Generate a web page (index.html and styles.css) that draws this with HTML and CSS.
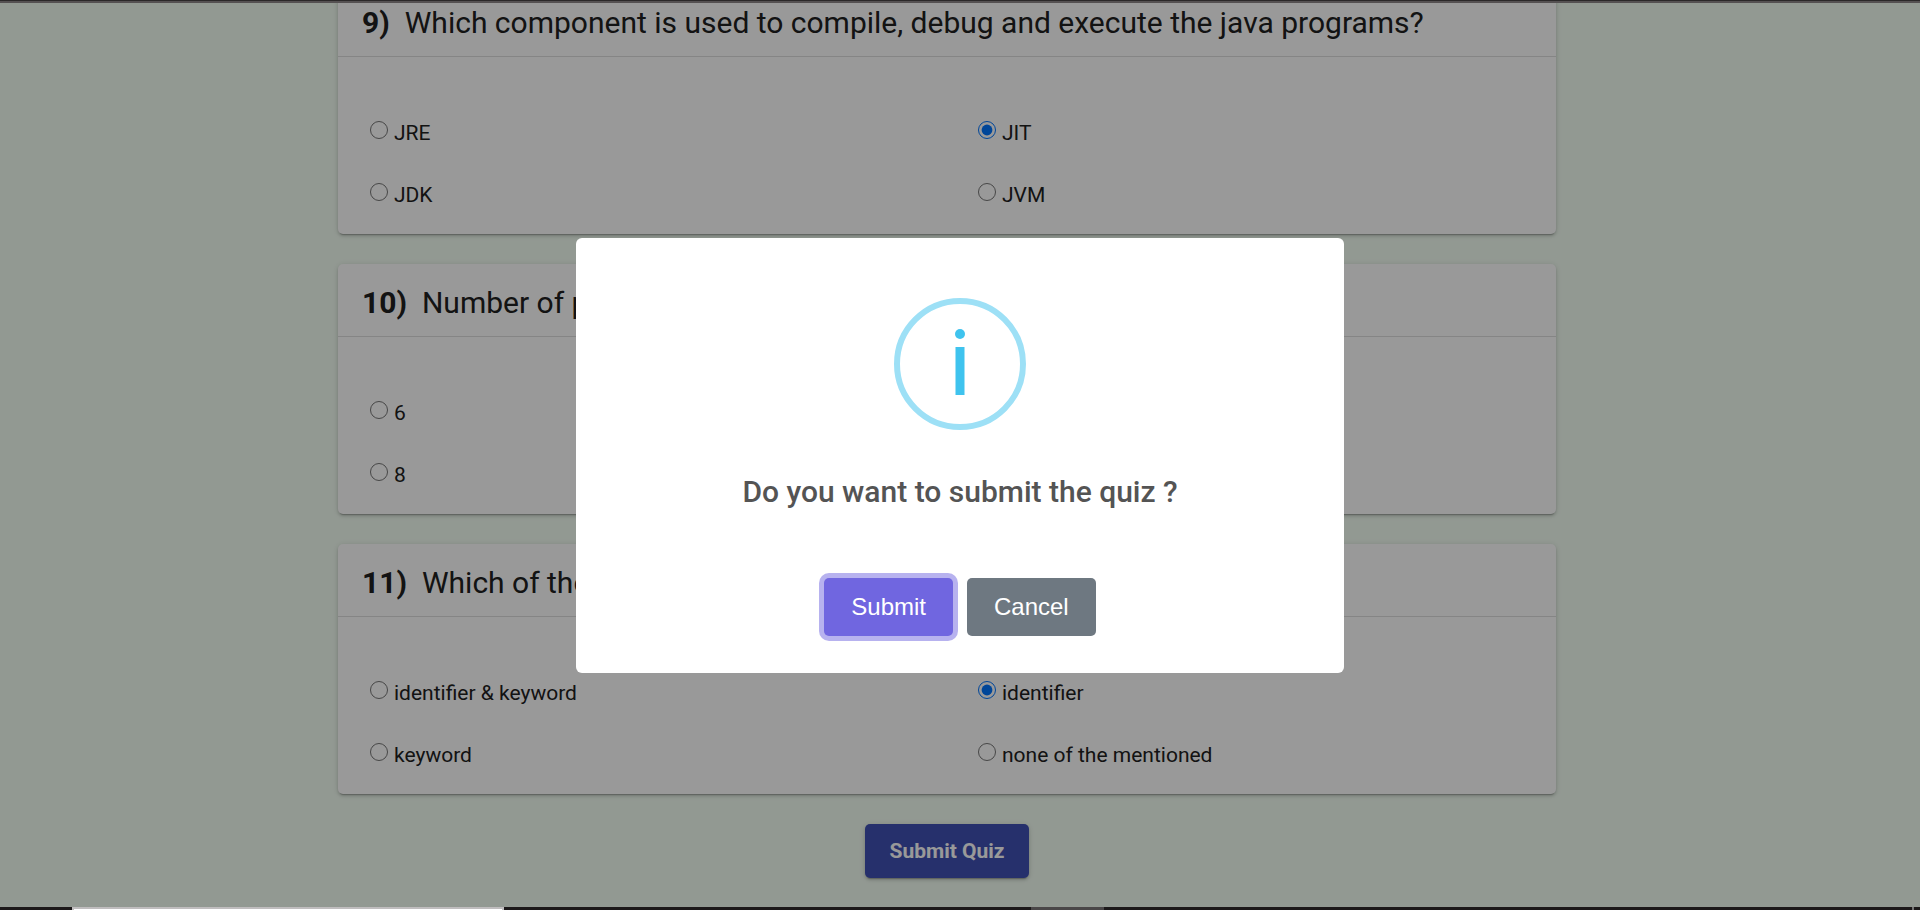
FILE: index.html
```html
<!DOCTYPE html>
<html lang="en">
<head>
<meta charset="utf-8">
<title>Quiz</title>
<link rel="stylesheet" href="styles.css">
</head>
<body>
<div class="window">
  <div class="window-edge"></div>
  <main class="page">
    <form class="quiz">
      <section class="card" role="radiogroup" aria-labelledby="q9-title">
        <h2 class="card-title" id="q9-title"><strong>9)</strong><span>Which component is used to compile, debug and execute the java programs?</span></h2>
        <div class="options">
          <label class="option"><input type="radio" name="q9"><span>JRE</span></label>
          <label class="option"><input type="radio" name="q9" checked><span>JIT</span></label>
          <label class="option"><input type="radio" name="q9"><span>JDK</span></label>
          <label class="option"><input type="radio" name="q9"><span>JVM</span></label>
        </div>
      </section>
      <section class="card" role="radiogroup" aria-labelledby="q10-title">
        <h2 class="card-title" id="q10-title"><strong>10)</strong><span>Number of p</span></h2>
        <div class="options">
          <label class="option option-first"><input type="radio" name="q10"><span>6</span></label>
          <label class="option option-first"><input type="radio" name="q10"><span>8</span></label>
        </div>
      </section>
      <section class="card" role="radiogroup" aria-labelledby="q11-title">
        <h2 class="card-title" id="q11-title"><strong>11)</strong><span>Which of the</span></h2>
        <div class="options">
          <label class="option"><input type="radio" name="q11"><span>identifier &amp; keyword</span></label>
          <label class="option"><input type="radio" name="q11" checked><span>identifier</span></label>
          <label class="option"><input type="radio" name="q11"><span>keyword</span></label>
          <label class="option"><input type="radio" name="q11"><span>none of the mentioned</span></label>
        </div>
      </section>
      <button type="button" class="submit-quiz">Submit Quiz</button>
    </form>
  </main>
  <div class="taskbar">
    <div class="task-active"></div>
    <div class="task-item"></div>
    <div class="task-end"></div>
  </div>
</div>
<div class="overlay">
  <div class="dialog" role="dialog" aria-modal="true" aria-labelledby="dialog-title">
    <svg class="dialog-icon" viewBox="0 0 132 132" aria-hidden="true">
      <circle cx="66" cy="66" r="63" fill="none" stroke="#9de0f6" stroke-width="6"/>
      <circle cx="66" cy="36" r="5" fill="#3fc3ee"/>
      <rect x="61.5" y="49" width="9" height="48" fill="#3fc3ee"/>
    </svg>
    <h2 class="dialog-title" id="dialog-title">Do you want to submit the quiz ?</h2>
    <div class="dialog-actions">
      <button type="button" class="action action-confirm">Submit</button>
      <button type="button" class="action action-cancel">Cancel</button>
    </div>
  </div>
</div>
</body>
</html>
```
FILE: styles.css
```css
* { box-sizing: border-box; }

body {
  margin: 0;
  font-family: Roboto, "Liberation Sans", sans-serif;
  color: #212121;
}

.window {
  display: flex;
  flex-direction: column;
  height: 100vh;
}

.window-edge {
  flex: none;
  height: 3px;
  background: #555152;
  border-top: 1px solid #2b2829;
}

.page {
  flex: 1;
  min-height: 0;
  overflow: hidden;
  background: #f4fff4;
  padding: 0 364px 0 338px;
}

/* The list is scrolled so that the first card starts above the top edge. */
.quiz {
  display: flex;
  flex-direction: column;
  gap: 30px;
  margin-top: -19px;
}

.card {
  border-radius: 5px;
  background: #fff;
  box-shadow: 0 3px 1px -2px rgba(0, 0, 0, .2), 0 2px 3px rgba(0, 0, 0, .14), 0 1px 6px rgba(0, 0, 0, .12);
}

.card-title {
  display: flex;
  gap: 15px;
  margin: 0;
  padding: 21px 24px 15px;
  border-bottom: 1px solid #dedede;
  font-size: 30px;
  line-height: 36px;
  font-weight: 400;
}

.options {
  display: grid;
  grid-template-columns: 1fr 1fr;
  row-gap: 38px;
  padding: 64px 2px 27px 0;
}

.option {
  display: flex;
  gap: 6px;
  padding-left: 32px;
  font-size: 21px;
  line-height: 24px;
}

.option-first { grid-column: 1; }

.option input {
  flex: none;
  width: 18px;
  height: 18px;
  margin: 0;
  accent-color: #0075ff;
}

.submit-quiz {
  align-self: center;
  padding: 15px 24px;
  border: 0;
  border-radius: 5px;
  background: #4050b5;
  color: #fff;
  font: bold 21px/24px Roboto, sans-serif;
  box-shadow: 0 3px 1px -2px rgba(0, 0, 0, .2), 0 2px 3px rgba(0, 0, 0, .14), 0 1px 6px rgba(0, 0, 0, .12);
}

.taskbar {
  flex: none;
  display: flex;
  height: 3px;
  padding: 0 6px 0 72px;
  background: #1c191a;
}

.task-active {
  width: 432px;
  background: #fff;
  border: 2px solid #bfbdbe;
  border-bottom: 0;
}

.task-item {
  width: 73px;
  margin-left: 527px;
  background: #4a4748;
}

.task-end {
  width: 2px;
  margin-left: auto;
  background: #777;
}

.overlay {
  position: fixed;
  inset: 3px 0;
  display: flex;
  align-items: center;
  justify-content: center;
  background: rgba(0, 0, 0, .4);
}

.dialog {
  display: flex;
  flex-direction: column;
  align-items: center;
  width: 40%;
  padding: 60px 24px 37px;
  border-radius: 6px;
  background: #fff;
}

.dialog-icon {
  width: 132px;
  height: 132px;
}

.dialog-title {
  margin: 44px 0 68px;
  color: #545454;
  font-size: 30px;
  line-height: 36px;
  font-weight: 500;
}

.dialog-actions {
  display: flex;
  gap: 14px;
}

.action {
  padding: 15px 27px;
  border: 0;
  border-radius: 5px;
  color: #fff;
  font: 24px/28px "Liberation Sans", Arial, sans-serif;
}

.action-confirm {
  background: #7066e0;
  box-shadow: 0 0 0 5px rgba(112, 102, 224, .5);
}

.action-cancel { background: #6e7881; }
```
